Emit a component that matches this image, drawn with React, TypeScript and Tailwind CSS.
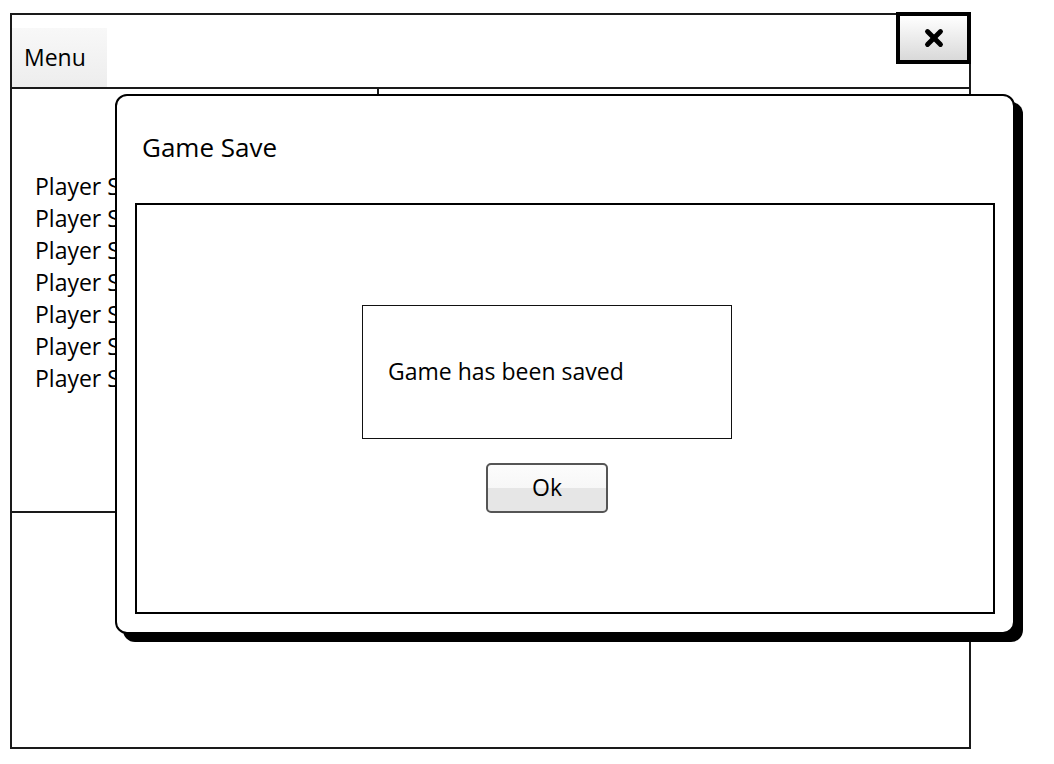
import { X } from 'lucide-react'

const players = ['Player Save 1', 'Player Save 2', 'Player Save 3', 'Player Save 4', 'Player Save 5', 'Player Save 6', 'Player Save 7']

function SaveDialog() {
  return (
    <div className="absolute left-[115px] top-[94px] flex h-[540px] w-[900px] flex-col rounded-[12px] border-2 border-black bg-white shadow-[8px_8px_0_#000]">
      <div className="flex h-[107px] items-center px-[25px] pb-[6px]">
        <h2 className="text-[26px] leading-none text-black">Game Save</h2>
      </div>
      <div className="mx-[18px] mb-[18px] flex-1 border-2 border-black">
        <div className="ml-[225px] flex w-[370px] flex-col items-center pt-[100px]">
          <div className="flex h-[134px] w-full items-center border-[1.5px] border-[#111] pl-[25px] pb-[2px]">
            <span className="text-[23px] text-black">Game has been saved</span>
          </div>
          <button className="mt-[24px] h-[50px] w-[122px] rounded-[5px] border-2 border-[#555] bg-[linear-gradient(#fcfcfc_0%,#f7f7f7_50%,#e6e6e6_50%,#e6e6e6_100%)] pb-[2px] text-[23px] leading-none text-black">
            Ok
          </button>
        </div>
      </div>
    </div>
  )
}

export default function App() {
  return (
    <div className="relative h-[764px] w-[1054px] overflow-hidden bg-white font-['Open_Sans',sans-serif] text-black">
      <div className="ml-[10px] mt-[13px] flex h-[736px] w-[961px] flex-col border-2 border-[#1a1a1a]">
        <div className="flex h-[74px] items-end border-b-2 border-[#1a1a1a]">
          <div className="flex h-[59px] w-[95px] items-center bg-[linear-gradient(#f8f8f8,#ededed)] pl-[12px]">
            <span className="text-[23px]">Menu</span>
          </div>
        </div>
        <div className="flex">
          <div className="h-[424px] w-[367px] overflow-hidden border-b-2 border-r-2 border-[#1a1a1a] pl-[23px] pt-[81px]">
            <ul className="flex flex-col">
              {players.map((name) => (
                <li className="h-[32px] whitespace-nowrap text-[23px] leading-[32px]" key={name}>
                  {name}
                </li>
              ))}
            </ul>
          </div>
        </div>
      </div>

      <button className="absolute left-[896px] top-[12px] flex h-[52px] w-[75px] items-center justify-center border-4 border-black bg-[linear-gradient(#ffffff,#d9d9d9)]">
        <X className="h-[26px] w-[26px]" strokeWidth={4.5} />
      </button>

      <SaveDialog />
    </div>
  )
}
